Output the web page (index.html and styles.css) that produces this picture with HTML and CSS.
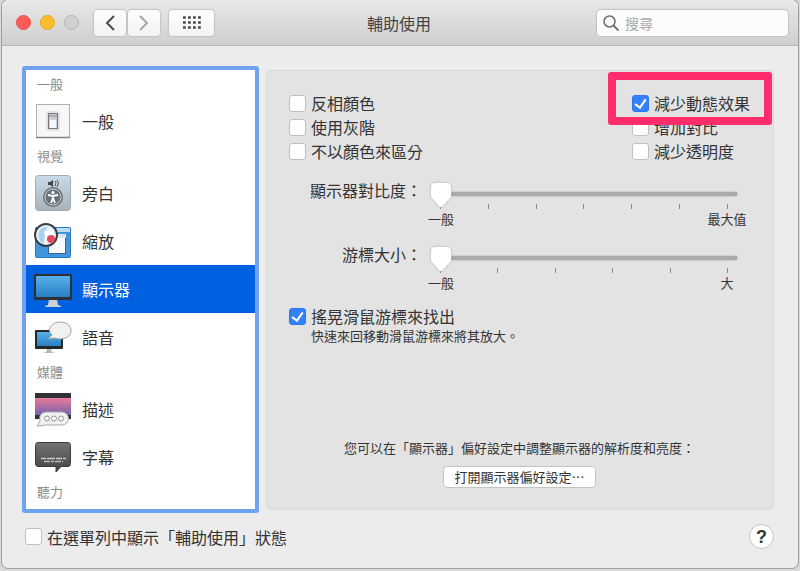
FILE: index.html
```html
<!DOCTYPE html>
<html lang="zh-Hant">
<head>
    <meta charset="UTF-8">
    <meta name="viewport" content="width=device-width, initial-scale=1.0">
    <title>輔助使用</title>
    <link rel="stylesheet" href="styles.css">
</head>
<body>

<div class="window">

    <header class="toolbar">
        <div class="lights">
            <span class="light red"></span>
            <span class="light yellow"></span>
            <span class="light off"></span>
        </div>
        <div class="nav-buttons">
            <button class="tool-button" aria-label="返回">
                <svg width="12" height="16" viewBox="0 0 12 16"><path d="M10 1L3 8l7 7" fill="none" stroke="#4a4a4a" stroke-width="2"/></svg>
            </button>
            <button class="tool-button" aria-label="前進">
                <svg width="12" height="16" viewBox="0 0 12 16"><path d="M2 1l7 7-7 7" fill="none" stroke="#a5a5a5" stroke-width="2"/></svg>
            </button>
        </div>
        <button class="tool-button wide" aria-label="顯示全部">
            <svg width="18" height="13" viewBox="0 0 18 13"><path d="M0 1.5h18M0 6.5h18M0 11.5h18" stroke="#484848" stroke-width="2.6" stroke-dasharray="2.8 2.2"/></svg>
        </button>
        <h1 class="title">輔助使用</h1>
        <label class="search">
            <svg width="16" height="16" viewBox="0 0 16 16"><circle cx="6.5" cy="6.5" r="5.5" fill="none" stroke="#6b6b6b" stroke-width="1.5"/><path d="M10.5 10.5l5 5" stroke="#6b6b6b" stroke-width="1.8"/></svg>
            <input type="text" placeholder="搜尋" aria-label="搜尋">
        </label>
    </header>

    <main class="content">
        <nav class="sidebar">
            <h2>一般</h2>
            <a href="#general">
                <svg class="icon" viewBox="0 0 40 40">
                    <rect x="3.5" y="3.5" width="33" height="33" fill="#f7f7f7" stroke="#b0b0b0"/>
                    <path d="M3 36.5h34" stroke="#858585" stroke-width="1.5"/>
                    <rect x="13" y="10" width="14" height="20" rx="3" fill="#e2e2e2"/>
                    <rect x="15.5" y="12.5" width="9" height="15" fill="#c8d0d5" stroke="#777"/>
                    <path d="M16 15h8" stroke="#888"/>
                    <rect x="17" y="19" width="6" height="8" fill="#f5f8fa"/>
                </svg>
                一般
            </a>
            <h2>視覺</h2>
            <a href="#voiceover">
                <svg class="icon" viewBox="0 0 40 40">
                    <defs><linearGradient id="steel" x2="0" y2="1"><stop stop-color="#c9dbe9"/><stop offset="1" stop-color="#a9b2ba"/></linearGradient></defs>
                    <rect x="2.5" y="2.5" width="35" height="35" rx="3" fill="url(#steel)" stroke="#a0acb6"/>
                    <path d="M15 9h2l3-2v7l-3-2h-2z" fill="#444"/>
                    <path d="M22 8q2 2 0 5M24 7q3 3 0 7" fill="none" stroke="#555"/>
                    <circle cx="20" cy="24" r="10" fill="#6c747b"/>
                    <circle cx="20" cy="24" r="8" fill="#69727a" stroke="#c9d1d7"/>
                    <circle cx="20" cy="19.5" r="1.6" fill="#fff"/>
                    <path d="M15 22l5 1 5-1M20 23v3M20 25l-2 5M20 25l2 5" fill="none" stroke="#fff" stroke-width="1.8"/>
                </svg>
                旁白
            </a>
            <a href="#zoom">
                <svg class="icon" viewBox="0 0 40 40">
                    <rect x="2.5" y="6.5" width="35" height="30" rx="1" fill="#3f96dc" stroke="#2879bb"/>
                    <rect x="20" y="7" width="17" height="4" fill="#b9dcf4"/>
                    <rect x="15.5" y="13.5" width="17" height="19" fill="#fafafa" stroke="#2d6698"/>
                    <path d="M22 13h11v4H22z" fill="#dce4e9"/>
                    <circle cx="13" cy="14" r="11" fill="#e7f3fb" stroke="#3a3e42" stroke-width="2"/>
                    <path d="M6 10q4-5 8-4l-4 17q-6-4-4-13z" fill="#a8d2f2"/>
                    <path d="M11 10h9v12h-7z" fill="#fff"/>
                    <circle cx="18" cy="18" r="4" fill="#e14b5f"/>
                </svg>
                縮放
            </a>
            <a href="#display" class="selected">
                <svg class="icon" viewBox="0 0 40 40">
                    <defs><linearGradient id="screen" x2="0" y2="1"><stop stop-color="#58b0e8"/><stop offset="1" stop-color="#287fc4"/></linearGradient></defs>
                    <path d="M16 30h8l1 6 3 1v1H12v-1l3-1z" fill="#cfcfcf"/>
                    <rect x="1" y="5" width="38" height="26" rx="1" fill="#2d3135"/>
                    <rect x="3" y="7" width="34" height="21" fill="url(#screen)"/>
                </svg>
                顯示器
            </a>
            <a href="#speech">
                <svg class="icon" viewBox="0 0 40 40">
                    <path d="M14 32h4l1 3 3 1H10l3-1z" fill="#b9b9b9"/>
                    <rect x="2" y="13" width="28" height="19" rx="1" fill="#25282b"/>
                    <rect x="4" y="15" width="24" height="14" fill="url(#screen)"/>
                    <path d="M15 22l4-4c-6-6 0-13 8-13 7 0 11 4 11 9 0 5-5 8-11 8-3 0-4-1-6-1z" fill="#f1f1f1" stroke="#a0a0a0"/>
                </svg>
                語音
            </a>
            <h2>媒體</h2>
            <a href="#descriptions">
                <svg class="icon" viewBox="0 0 40 40">
                    <defs><linearGradient id="sunset" x2="0" y2="1"><stop stop-color="#ec7a98"/><stop offset="1" stop-color="#7263ad"/></linearGradient></defs>
                    <rect x="2" y="4" width="36" height="26" fill="#303036"/>
                    <rect x="2" y="9" width="36" height="17" fill="url(#sunset)"/>
                    <path d="M13 23h16a6.5 6.5 0 0 1 0 13H12q-4 1-8 1l3-5q-2-8 6-9z" fill="#f1f1f1" stroke="#a9a9a9"/>
                    <g fill="#fff" stroke="#929292"><circle cx="14" cy="29.5" r="2.5"/><circle cx="21" cy="29.5" r="2.5"/><circle cx="28" cy="29.5" r="2.5"/></g>
                </svg>
                描述
            </a>
            <a href="#captions">
                <svg class="icon" viewBox="0 0 40 40">
                    <defs><linearGradient id="slate" x2="0" y2="1"><stop stop-color="#747474"/><stop offset="1" stop-color="#414141"/></linearGradient></defs>
                    <path d="M5 5.5h30q2.5 0 2.5 3v18q0 3-2.5 3h-7L23 35v-5.5H5q-2.5 0-2.5-3v-18q0-3 2.500-3z" fill="url(#slate)" stroke="#3c3c3c"/>
                    <path d="M8 21.5h25" stroke="#ccc" stroke-width="1.5" stroke-dasharray="5 1 8 1 6 1"/>
                    <path d="M11 24.5h19" stroke="#bbb" stroke-width="1.5" stroke-dasharray="6 1 3 1"/>
                </svg>
                字幕
            </a>
            <h2>聽力</h2>
        </nav>

        <section class="panel">
            <div class="checks">
                <div>
                    <label class="check"><input type="checkbox">反相顏色</label>
                    <label class="check"><input type="checkbox">使用灰階</label>
                    <label class="check"><input type="checkbox">不以顏色來區分</label>
                </div>
                <div>
                    <label class="check marked"><input type="checkbox" checked>減少動態效果</label>
                    <label class="check"><input type="checkbox">增加對比</label>
                    <label class="check"><input type="checkbox">減少透明度</label>
                </div>
            </div>

            <div class="sliders">
                <label for="contrast">顯示器對比度：</label>
                <div class="slider">
                    <input type="range" id="contrast" min="0" max="6" value="0">
                    <div class="ticks"><i></i><i></i><i></i><i></i><i></i><i></i><i></i></div>
                    <div class="ends"><span>一般</span><span>最大值</span></div>
                </div>
                <label for="cursor">游標大小：</label>
                <div class="slider">
                    <input type="range" id="cursor" min="0" max="5" value="0">
                    <div class="ticks"><i></i><i></i><i></i><i></i><i></i><i></i></div>
                    <div class="ends"><span>一般</span><span>大</span></div>
                </div>
            </div>

            <label class="check"><input type="checkbox" checked>搖晃滑鼠游標來找出</label>
            <p class="note">快速來回移動滑鼠游標來將其放大。</p>

            <div class="more">
                <p>您可以在「顯示器」偏好設定中調整顯示器的解析度和亮度：</p>
                <button class="push-button">打開顯示器偏好設定⋯</button>
            </div>
        </section>
    </main>

    <footer class="footer">
        <label class="check"><input type="checkbox">在選單列中顯示「輔助使用」狀態</label>
        <button class="help" aria-label="輔助說明">?</button>
    </footer>

</div>

</body>
</html>
```

FILE: styles.css
```css
* {
    box-sizing: border-box;
}

body {
    margin: 0;
    padding: 0 2px 3px;
    min-height: 100vh;
    display: flex;
    background-color: #d8d8d8;
    color: #333;
    font-family: "Noto Sans CJK TC", sans-serif;
    font-size: 16px;
    line-height: 24px;
}

h1, h2, p {
    margin: 0;
    font-weight: normal;
}

button, input {
    margin: 0;
    font-family: inherit;
    color: inherit;
}

.window {
    flex: 1;
    display: flex;
    flex-direction: column;
    background-color: #ececec;
    border-radius: 6px;
    box-shadow: 0 0 0 1px #a0a0a0;
    overflow: hidden;
}

/* toolbar */
.toolbar {
    height: 46px;
    padding: 0 10px 0 14px;
    display: flex;
    align-items: center;
    background: linear-gradient(#e8e8e8, #cfcfcf);
    border-bottom: 1px solid #b5b5b5;
}

.lights {
    display: flex;
    gap: 9px;
    margin-right: 15px;
}

.light {
    width: 15px;
    height: 15px;
    border-radius: 50%;
    border: 1px solid #b5b5b5;
}

.red {
    background-color: #fc5b57;
    border-color: #e9504c;
}

.yellow {
    background-color: #fdbc2e;
    border-color: #e5a526;
}

.off {
    background-color: #d0d0d0;
}

.nav-buttons {
    display: flex;
    gap: 2px;
    margin-right: 9px;
}

.tool-button {
    width: 32px;
    height: 26px;
    padding: 0;
    display: flex;
    align-items: center;
    justify-content: center;
    background: linear-gradient(#fefefe, #f3f3f3);
    border: none;
    border-radius: 4px;
    box-shadow: 0 0 1px 1px #c2c2c2;
}

.wide {
    width: 45px;
}

.title {
    flex: 1;
    padding-right: 13px;
    font-size: 16px;
    text-align: center;
    color: #444;
}

.search {
    width: 191px;
    height: 26px;
    padding-left: 6px;
    display: flex;
    align-items: center;
    gap: 4px;
    background-color: #fcfcfc;
    border-radius: 4px;
    box-shadow: 0 0 1px 1px #c2c2c2;
}

.search input {
    flex: 1;
    min-width: 0;
    border: none;
    background: none;
    font-size: 14px;
    outline: none;
}

.search input::placeholder {
    color: #aaa;
}

/* sidebar */
.content {
    padding: 20px 24px 0 20px;
    display: flex;
    gap: 7px;
}

.sidebar {
    width: 237px;
    padding: 3px 0 4px;
    background-color: #fff;
    border: 4px solid #6fa3ef;
    border-radius: 3px;
}

.sidebar h2 {
    height: 24px;
    padding-left: 11px;
    font-size: 13px;
    line-height: 22px;
    color: #8a8a8a;
}

.sidebar a {
    height: 48px;
    padding-left: 7px;
    display: flex;
    align-items: center;
    gap: 9px;
    color: inherit;
    text-decoration: none;
}

.sidebar .selected {
    background-color: #0061e0;
    color: #fff;
}

.icon {
    width: 40px;
    height: 40px;
}

/* settings */
.panel {
    flex: 1;
    margin: 4px 0 3px;
    padding: 20px 23px 21px 22px;
    display: flex;
    flex-direction: column;
    background-color: #e3e3e3;
    border: 1px solid #dadada;
    border-radius: 4px;
}

.checks {
    display: flex;
    justify-content: space-between;
}

.check {
    height: 24px;
    display: flex;
    align-items: center;
    gap: 5px;
}

.check input {
    appearance: none;
    width: 17px;
    height: 17px;
    background-color: #fff;
    border: 1px solid #c0c0c0;
    border-radius: 3px;
}

.check input:checked {
    display: grid;
    place-items: center;
    background-color: #3382fb;
    border-color: #2b78ee;
}

.check input:checked::after {
    content: "";
    width: 5px;
    height: 9px;
    border: solid #fff;
    border-width: 0 2px 2px 0;
    box-sizing: content-box;
    transform: translateY(-1px) rotate(35deg);
}

.marked {
    position: relative;
}

.marked::after {
    content: "";
    position: absolute;
    top: -19px;
    right: -22px;
    bottom: -10px;
    left: -24px;
    border: 8px solid #ff2d6c;
    border-radius: 3px;
    pointer-events: none;
}

.sliders {
    margin: 15px 13px 11px 0;
    display: grid;
    grid-template-columns: 133px 1fr;
    gap: 13px 9px;
}

.sliders label {
    text-align: right;
}

.slider {
    padding-top: 5px;
}

.slider input {
    appearance: none;
    display: block;
    width: 100%;
    height: 24px;
    background: linear-gradient(#aaa, #aaa) center 9px / 100% 4px no-repeat;
}

.slider input::-webkit-slider-thumb {
    appearance: none;
    width: 20px;
    height: 24px;
    background: linear-gradient(#fff, #fff);
    clip-path: path("M4 0h12q4 0 4 4v10l-9 10h-2l-9-10v-10q0-4 4-4z");
}

.slider input {
    filter: drop-shadow(0 0 1px #aaa);
}

.ticks {
    margin-top: -3px;
    padding: 0 9px;
    display: flex;
    justify-content: space-between;
}

.ticks i {
    width: 1px;
    height: 5px;
    background-color: #888;
}

.ends {
    margin: 0 -11px;
    display: flex;
    justify-content: space-between;
    font-size: 13px;
    line-height: 20px;
}

.ends span {
    width: 42px;
    text-align: center;
}

.note {
    padding-left: 22px;
    font-size: 13px;
    line-height: 16px;
}

.more {
    margin-top: auto;
    display: flex;
    flex-direction: column;
    align-items: center;
    gap: 8px;
    font-size: 13px;
    line-height: 20px;
}

.push-button {
    height: 22px;
    padding: 0 10px;
    background-color: #fff;
    border: 1px solid #c4c4c4;
    border-radius: 4px;
    font-size: 13px;
    line-height: 20px;
}

/* footer */
.footer {
    padding: 11px 24px 0 23px;
    display: flex;
    align-items: center;
    justify-content: space-between;
}

.help {
    width: 25px;
    height: 25px;
    padding: 0;
    background-color: #fff;
    border: 1px solid #c4c4c4;
    border-radius: 50%;
    font-family: "Liberation Sans", sans-serif;
    font-size: 18px;
    font-weight: bold;
    line-height: 22px;
}
```
